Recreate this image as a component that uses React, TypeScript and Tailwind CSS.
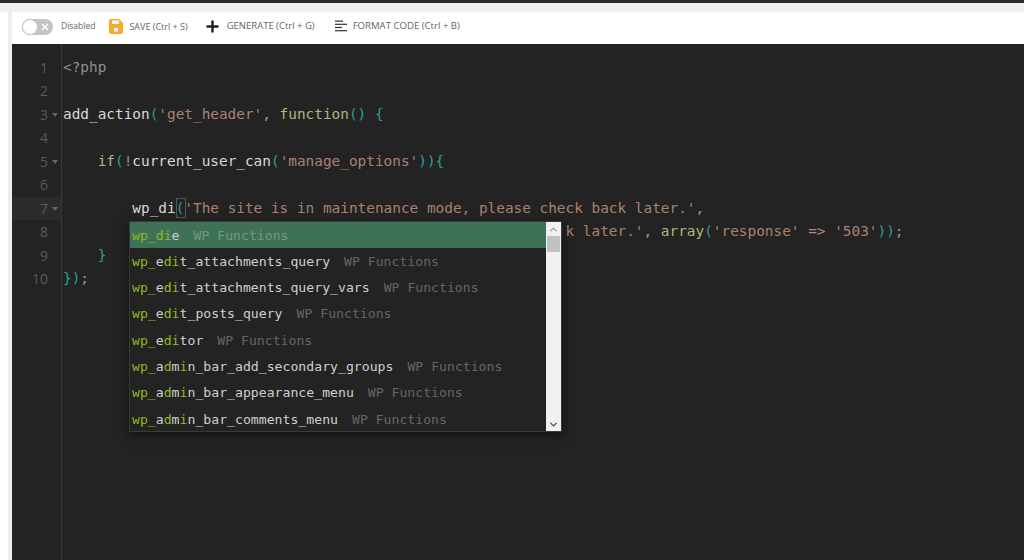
import { ChevronDown, ChevronUp, Plus, X } from 'lucide-react';

type Token = [string, string];

const c = {
  base: 'text-[#d8d8d8]',
  tag: 'text-[#8f8f8f]',
  str: 'text-[#a98270]',
  brace: 'text-[#2f9c9c]',
  kw: 'text-[#aeb87a]',
  punct: 'text-[#9a9a9a]',
  op: 'text-[#b08a78]',
};

// one entry per line of the editor
const lines: { tokens: Token[]; fold?: boolean; active?: boolean }[] = [
  { tokens: [['<?php', c.tag]] },
  { tokens: [] },
  {
    fold: true,
    tokens: [
      ['add_action', c.base],
      ['(', c.brace],
      ["'get_header'", c.str],
      [', ', c.punct],
      ['function', c.kw],
      ['()', c.brace],
      [' ', c.base],
      ['{', c.brace],
    ],
  },
  { tokens: [] },
  {
    fold: true,
    tokens: [
      ['    ', c.base],
      ['if', c.kw],
      ['(', c.brace],
      ['!', c.op],
      ['current_user_can', c.base],
      ['(', c.brace],
      ["'manage_options'", c.str],
      ['))', c.brace],
      ['{', c.brace],
    ],
  },
  { tokens: [] },
  {
    fold: true,
    active: true,
    tokens: [
      ['        ', c.base],
      ['wp_di', c.base],
      ['(', c.brace],
      ["'The site is in maintenance mode, please check back later.'", c.str],
      [',', c.punct],
    ],
  },
  {
    // the start of this line sits behind the popup
    tokens: [
      [' '.repeat(58), c.base],
      ["k later.'", c.str],
      [', ', c.punct],
      ['array', c.kw],
      ['(', c.brace],
      ["'response'", c.str],
      [' ', c.base],
      ['=>', c.op],
      [' ', c.base],
      ["'503'", c.str],
      ['))', c.brace],
      [';', c.punct],
    ],
  },
  { tokens: [['    ', c.base], ['}', c.brace]] },
  { tokens: [['})', c.brace], [';', c.punct]] },
];

const suggestions = [
  'wp_die',
  'wp_edit_attachments_query',
  'wp_edit_attachments_query_vars',
  'wp_edit_posts_query',
  'wp_editor',
  'wp_admin_bar_add_secondary_groups',
  'wp_admin_bar_appearance_menu',
  'wp_admin_bar_comments_menu',
];

// fuzzy match of "wp_di" against the suggestion: returns the matched indexes
function matchIndexes(text: string) {
  const typed = 'wp_di';
  const found: number[] = [];
  let pos = 0;
  for (let i = 0; i < text.length && pos < typed.length; i++) {
    if (text[i] === typed[pos]) {
      found.push(i);
      pos++;
    }
  }
  return found;
}

function SaveIcon() {
  return (
    <svg width="14" height="15" viewBox="0 0 14 15" className="block">
      <path d="M2 0h8l4 4v9a2 2 0 0 1-2 2H2a2 2 0 0 1-2-2V2a2 2 0 0 1 2-2z" fill="#f6ab2e" />
      <rect x="3" y="1.5" width="7" height="3.5" fill="#fff" />
      <rect x="5" y="9" width="4" height="3.5" fill="#fff" />
    </svg>
  );
}

function FormatIcon() {
  return (
    <svg width="13" height="13" viewBox="0 0 13 13" fill="#333" className="block">
      <rect x="0" y="0.5" width="8" height="1.2" />
      <rect x="0" y="3.7" width="12" height="1.2" />
      <rect x="0" y="6.9" width="7" height="1.2" />
      <rect x="0" y="10.1" width="12" height="1.2" />
    </svg>
  );
}

function Suggestion({ text, selected }: { text: string; selected: boolean }) {
  const hits = matchIndexes(text);
  return (
    <div className={`h-[26.3px] flex items-center pl-[2px] whitespace-pre ${selected ? 'bg-[#3f7156]' : ''}`}>
      <span className="text-[#cfcfcf]">
        {text.split('').map((ch, i) => (
          <span key={i} className={hits.includes(i) ? 'text-[#8fbb1e]' : ''}>{ch}</span>
        ))}
      </span>
      <span className={`ml-[14px] ${selected ? 'text-[#6f9a82]' : 'text-[#666666]'}`}>WP Functions</span>
    </div>
  );
}

export default function App() {
  return (
    <div className="w-[1024px] h-[560px] overflow-hidden bg-white flex flex-col font-['Open_Sans',sans-serif]">
      <div className="h-[3px] bg-[#2a2a2a] shrink-0" />
      <div className="h-[9px] bg-[#f0f0f0] shrink-0" />

      <div className="flex-1 flex min-h-0">
        <div className="w-[8px] shrink-0 bg-white" />
        <div className="w-[4px] shrink-0 bg-[#eeeeee]" />

        <div className="flex-1 flex flex-col min-w-0">
          {/* Toolbar */}
          <div className="h-[32px] shrink-0 bg-white flex items-center pl-[10px] pb-[3px] text-[#666666]">
            <div className="w-[31px] h-[16px] rounded-full bg-[#c4c4c4] relative shrink-0">
              <div className="absolute left-0 top-0 w-[16px] h-[16px] rounded-full bg-white border border-[#c4c4c4]" />
              <X size={10} strokeWidth={4} className="absolute right-[3px] top-[3px] text-white" />
            </div>
            <span className="ml-[8px] text-[8.5px]">Disabled</span>
            <span className="ml-[14px]"><SaveIcon /></span>
            <span className="ml-[6px] text-[9px]">SAVE (Ctrl + S)</span>
            <Plus size={17} strokeWidth={3.5} className="ml-[16px] text-[#222222]" />
            <span className="ml-[6px] text-[9.5px]">GENERATE (Ctrl + G)</span>
            <span className="ml-[20px]"><FormatIcon /></span>
            <span className="ml-[5px] text-[9.6px]">FORMAT CODE (Ctrl + B)</span>
          </div>

          {/* Editor */}
          <div className="flex-1 relative bg-[#232323] pt-[12px] font-['DejaVu_Sans_Mono',monospace] text-[14.4px] leading-[23.44px]">
            <div className="absolute left-[49px] top-0 bottom-0 w-[1px] bg-[#383838]" />
            {lines.map((line, i) => (
              <div key={i} className="flex h-[23.44px]">
                <div className={`w-[49px] shrink-0 flex justify-end relative pr-[13px] text-[#5a5a5a] font-['Open_Sans',sans-serif] text-[14px] ${line.active ? 'bg-[#2b2b2b]' : ''}`}>
                  {i + 1}
                  {line.fold && (
                    <span className="absolute right-[3px] top-[10px] w-0 h-0 border-l-[3px] border-r-[3px] border-t-[4px] border-l-transparent border-r-transparent border-t-[#666666]" />
                  )}
                </div>
                <div className="pl-[2px] whitespace-pre relative">
                  {line.tokens.map(([text, color], j) => (
                    <span key={j} className={color}>{text}</span>
                  ))}
                  {line.active && (
                    <span className="absolute left-[115px] top-[1px] w-[10px] h-[20px] border border-[#4d5a63]" />
                  )}
                </div>
              </div>
            ))}

            {/* Autocomplete popup */}
            <div className="absolute left-[117px] top-[177px] w-[433px] h-[211px] flex border border-[#3a3a3a] shadow-[0_3px_10px_rgba(0,0,0,0.5)] bg-[#232323] text-[13.15px] leading-none">
              <div className="flex-1 min-w-0">
                {suggestions.map((text, i) => (
                  <Suggestion key={text} text={text} selected={i === 0} />
                ))}
              </div>
              <div className="w-[15px] shrink-0 bg-[#f1f1f1] flex flex-col items-center relative">
                <ChevronUp size={11} strokeWidth={3} className="text-[#a0a0a0] mt-[2px]" />
                <div className="w-[13px] h-[16px] bg-[#c1c1c1] mt-[1px]" />
                <ChevronDown size={11} strokeWidth={3} className="absolute bottom-[1px] text-[#505050]" />
              </div>
            </div>
          </div>
        </div>
      </div>
    </div>
  );
}
